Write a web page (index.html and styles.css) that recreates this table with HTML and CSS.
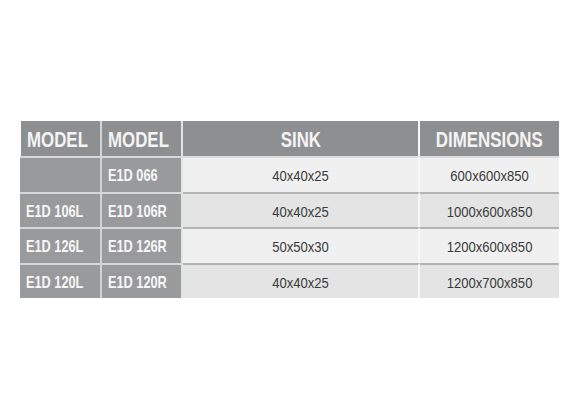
FILE: index.html
```html
<!DOCTYPE html>
<html>
<head>
<meta charset="utf-8">
<link rel="stylesheet" href="styles.css">
</head>
<body>
<div class="table">
  <div class="cell head c1 left"><span class="cond">MODEL</span></div>
  <div class="cell head c2 left"><span class="cond">MODEL</span></div>
  <div class="cell head c3 center"><span class="cond">SINK</span></div>
  <div class="cell head c4 center"><span class="cond">DIMENSIONS</span></div>

  <div class="cell model c1 first left"></div>
  <div class="cell model c2 first left"><span class="cond m">E1D 066</span></div>
  <div class="cell data c3 first odd center"><span class="num">40x40x25</span></div>
  <div class="cell data c4 first odd center"><span class="num">600x600x850</span></div>

  <div class="cell model c1 left"><span class="cond m">E1D 106L</span></div>
  <div class="cell model c2 left"><span class="cond m">E1D 106R</span></div>
  <div class="cell data c3 even center"><span class="num">40x40x25</span></div>
  <div class="cell data c4 even center"><span class="num">1000x600x850</span></div>

  <div class="cell model c1 left"><span class="cond m">E1D 126L</span></div>
  <div class="cell model c2 left"><span class="cond m">E1D 126R</span></div>
  <div class="cell data c3 odd center"><span class="num">50x50x30</span></div>
  <div class="cell data c4 odd center"><span class="num">1200x600x850</span></div>

  <div class="cell model c1 left"><span class="cond m">E1D 120L</span></div>
  <div class="cell model c2 left"><span class="cond m">E1D 120R</span></div>
  <div class="cell data c3 even center"><span class="num">40x40x25</span></div>
  <div class="cell data c4 even center"><span class="num">1200x700x850</span></div>
</div>
</body>
</html>
```
FILE: styles.css
```css
html, body {
  margin: 0;
  padding: 0;
  background: #ffffff;
}
body {
  width: 580px;
  height: 420px;
  overflow: hidden;
  font-family: "Liberation Sans", Arial, sans-serif;
}
.table {
  display: grid;
  grid-template-columns: 82px 81px 237px 139px;
  grid-template-rows: 35px repeat(4, 35.5px);
  margin: 121px 0 0 20px;
  width: 539px;
}
.cell {
  box-sizing: border-box;
  display: flex;
  align-items: center;
  padding-top: 3px;
  overflow: visible;
  white-space: nowrap;
}
.c1 { border-right: 2px solid #d3d4d5; }
.c2 { border-right: 2px solid #e3e3e3; }
.c3 { border-right: 2px solid #f8f8f8; }
.left { justify-content: flex-start; padding-left: 6px; }
.center { justify-content: center; }
.head {
  background: #8e8f91;
  color: #f4f4f4;
  font-weight: bold;
  font-size: 22.5px;
}
.head.c1 { margin-left: 1px; }
.model {
  background: #999a9c;
  color: #f7f7f7;
  font-weight: bold;
  font-size: 17px;
  border-top: 2px solid #d6d7d8;
}
.data {
  color: #3a3a3a;
  font-size: 14.5px;
  border-top: 2px solid #b3b3b3;
}
.data.first { border-top-color: #dcdcdc; }
.odd { background: #f0f0f0; }
.even { background: #e4e4e4; }
.cond {
  display: inline-block;
  transform: scaleX(0.75);
}
.left .cond { transform-origin: left center; }
.center .cond { transform-origin: center center; }
.num {
  display: inline-block;
  transform: scaleX(0.9);
  transform-origin: center center;
}
```
